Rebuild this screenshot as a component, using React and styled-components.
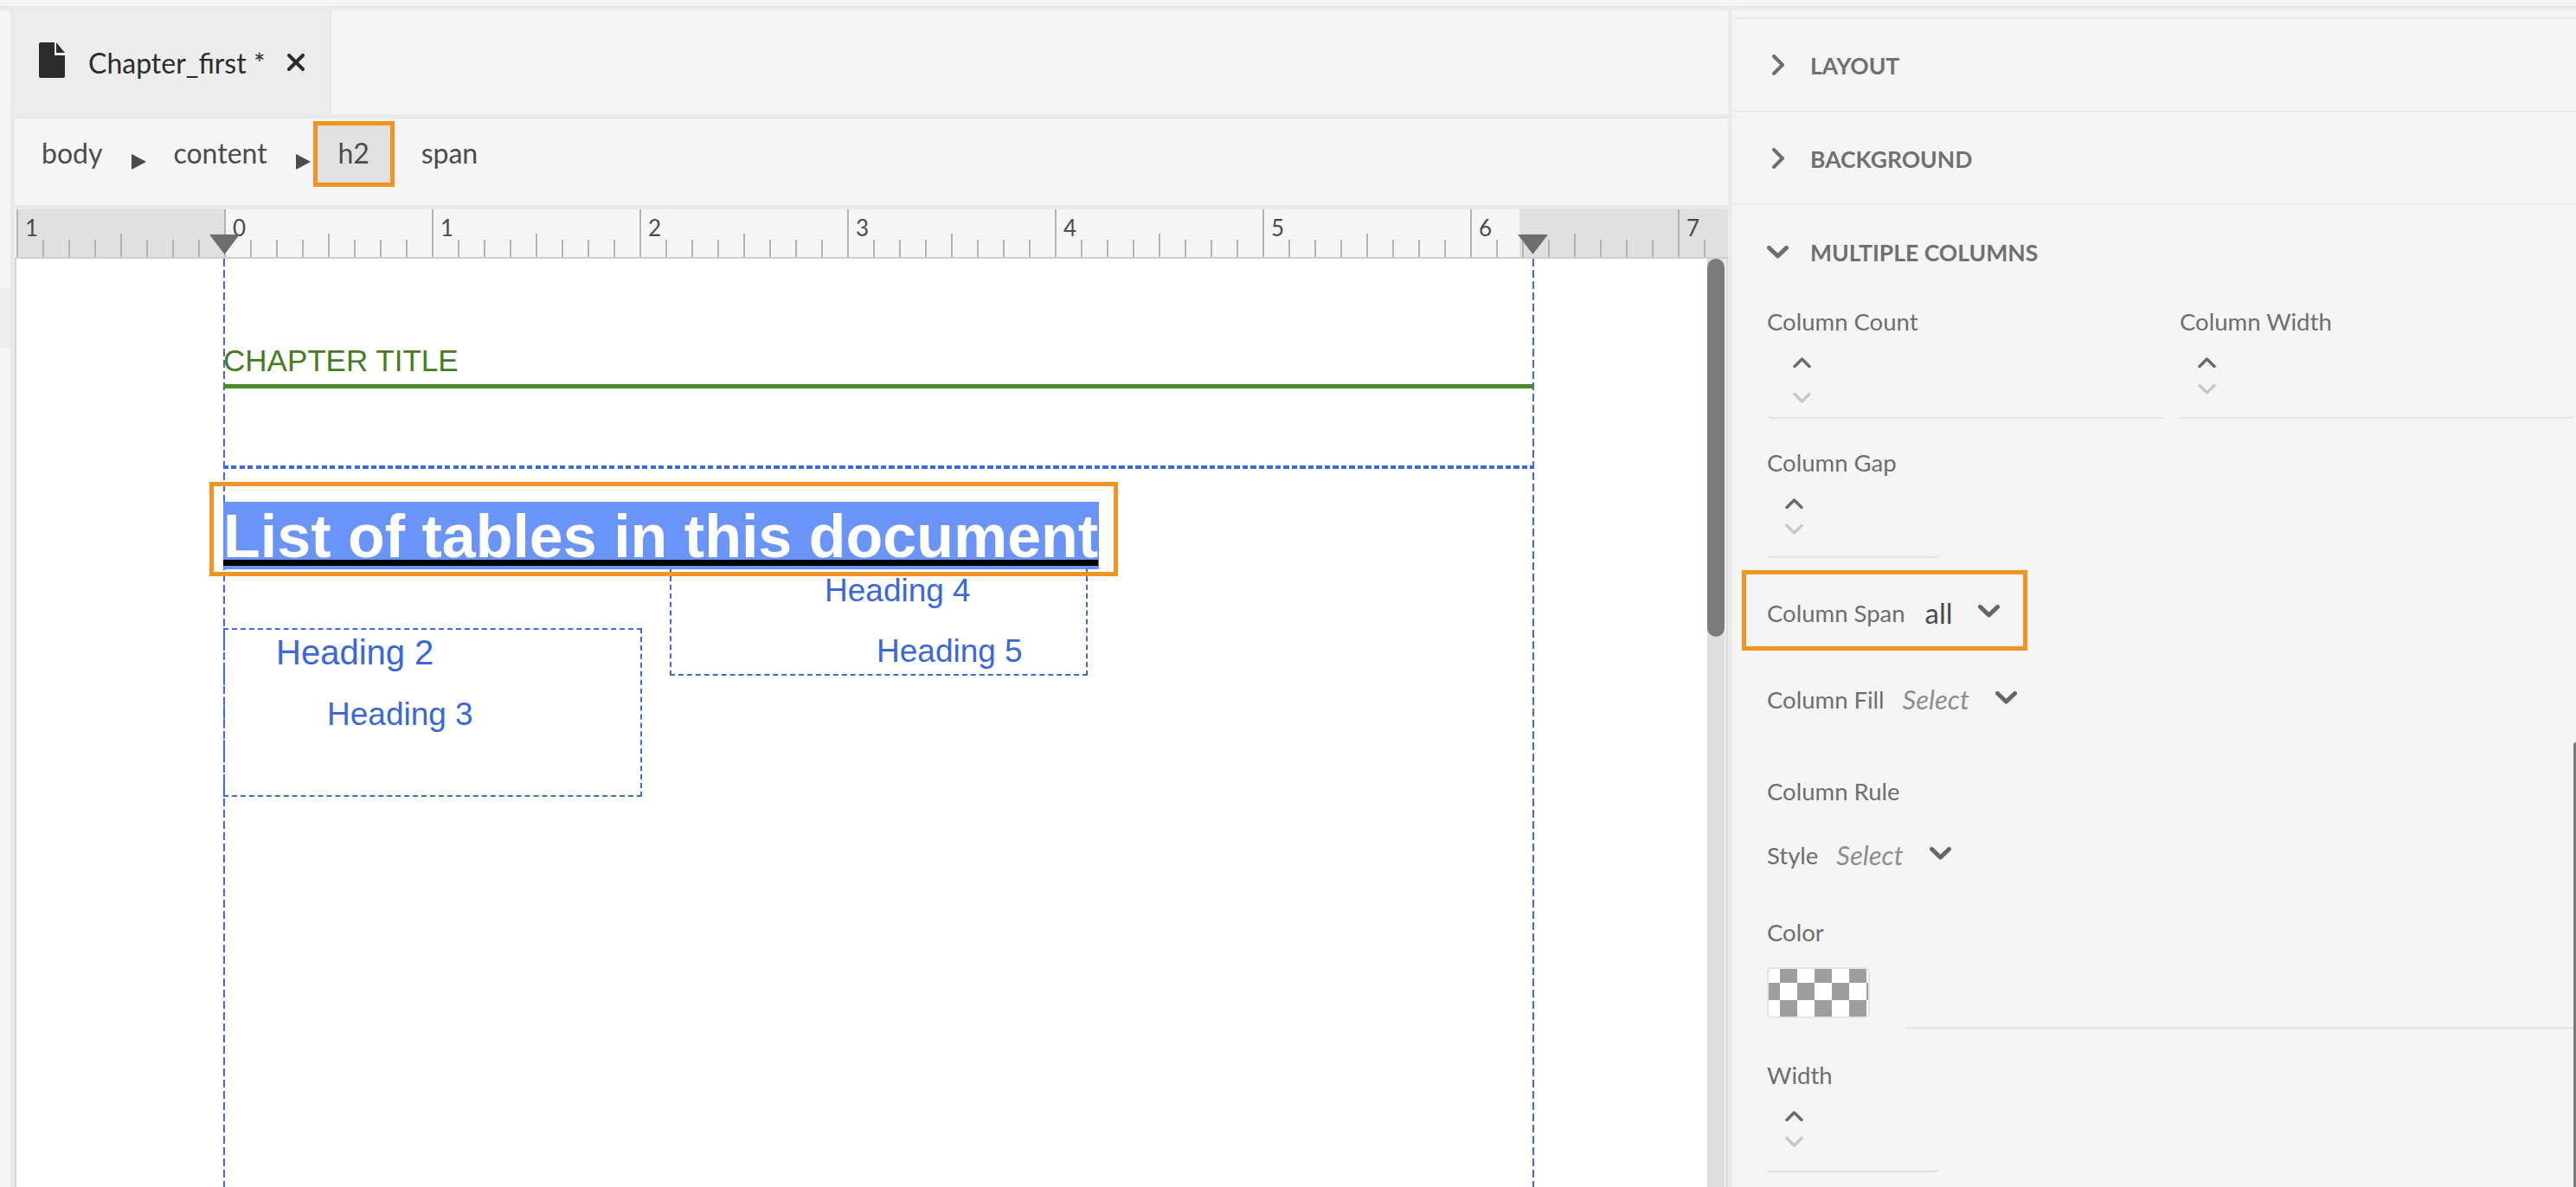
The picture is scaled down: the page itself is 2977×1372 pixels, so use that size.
import React from "react";
import styled, { createGlobalStyle } from "styled-components";

const Global = createGlobalStyle`
  html, body { margin: 0; padding: 0; background: #f5f5f5; }
  * { box-sizing: border-box; }
`;

const UI = `"Lato", "Open Sans", sans-serif`;
const ARIAL = `"Liberation Sans", Arial, sans-serif`;
const ORANGE = "#f29423";
const BLUE = "#3b6bdc";

const Root = styled.div`
  width: 2977px; height: 1372px; overflow: hidden; position: relative;
  background: #f5f5f5; display: flex; flex-direction: column; font-family: ${UI};
`;
const TopBand = styled.div`
  height: 12px; flex: none; background: #f5f5f5; border-bottom: 5px solid #e9e9e9;
`;
const Body = styled.div`display: flex; flex: 1; min-height: 0;`;
const Gutter = styled.div`
  width: 17px; flex: none; border-right: 5px solid #e9e9e9; padding-top: 320px;
`;
const GutterPatch = styled.div`height: 70px; background: #eeeeee;`;
const Main = styled.div`width: 1980px; flex: none; display: flex; flex-direction: column;`;
const Divider = styled.div`width: 5px; flex: none; background: #ebebeb;`;

const TabBar = styled.div`height: 125px; flex: none; display: flex; border-bottom: 5px solid #e9e9e9;`;
const Tab = styled.div`
  width: 366px; display: flex; align-items: center; padding-left: 28px;
  background: #ededed; border-right: 3px solid #e9e9e9;
`;
const TabTitle = styled.span`
  font-size: 32px; color: #2c2c2c; margin: 0 26px 0 27px; white-space: nowrap;
`;
const Crumbs = styled.div`
  height: 105px; flex: none; display: flex; align-items: center;
  padding: 3px 0 21px 31px; border-bottom: 5px solid #e9e9e9;
`;
const Crumb = styled.span`
  font-size: 32px; color: #4b4b4b; margin: -3px 0 0 ${(p) => p.$gap || 0}px; white-space: nowrap;
`;
const ActiveCrumb = styled.span`
  width: 94px; height: 76px; margin-left: 3px; padding-bottom: 3px; background: #e1e1e1;
  border: 5px solid ${ORANGE}; display: flex; align-items: center; justify-content: center; flex: none;
  font-size: 32px; color: #4b4b4b;
`;
const RulerWrap = styled.div`height: 57px; flex: none; border-bottom: 2px solid #cfcfcf;`;
const RulerSvg = styled.svg`display: block;`;
const Doc = styled.div`
  flex: 1; min-height: 0; display: flex; background: #fff; border-left: 2px solid #d6d6d6;
  border-right: 3px solid #e0e0e0; overflow: hidden;
`;
const DocCanvas = styled.div`flex: 1; min-width: 0; padding-left: 239px;`;
const Page = styled.div`
  width: 1515px; height: 100%; padding: 100px 1px 0 0;
  background:
    repeating-linear-gradient(to bottom, ${BLUE} 0 9px, transparent 9px 13px) left top / 2px 100% no-repeat,
    repeating-linear-gradient(to bottom, ${BLUE} 0 9px, transparent 9px 13px) right top / 2px 100% no-repeat;
`;
const ChapterTitle = styled.div`
  font: 35px/36px ${ARIAL}; color: #467c1f; height: 36px; white-space: nowrap;
`;
const ChapterRule = styled.div`height: 5px; margin-top: 9px; background: #4a8a2c;`;
const DottedRule = styled.div`
  height: 4px; margin-top: 89px;
  background: repeating-linear-gradient(to right, ${BLUE} 0 6px, transparent 6px 9.5px);
`;
const HeadingFrame = styled.div`
  width: 1050px; height: 109px; margin: 15px 0 0 -16px; padding: 18px 0 0 11px;
  border: 5px solid ${ORANGE}; position: relative; z-index: 2;
`;
const HeadingText = styled.span`
  display: block; width: 1012px; height: 78px; background: #6b94f9; color: #fff;
  font: 700 70px/80px ${ARIAL}; white-space: nowrap;
  text-decoration: underline; text-decoration-color: #000; text-decoration-thickness: 7px;
  text-underline-offset: 3px; text-decoration-skip-ink: none;
`;
const Columns = styled.div`display: flex; align-items: flex-start; gap: 32px; margin-top: 60px;`;
const ColumnBox = styled.div`
  width: ${(p) => p.$w}px; height: ${(p) => p.$h}px; margin-top: ${(p) => p.$top}px;
  border: 2px dashed ${BLUE}; padding-top: ${(p) => p.$pad}px;
`;
const BoxHeading = styled.div`
  font-family: ${ARIAL}; color: #3b68d6; white-space: nowrap;
  font-size: ${(p) => p.$size}px; line-height: ${(p) => p.$lh}px;
  padding-left: ${(p) => p.$indent}px; margin-top: ${(p) => p.$gap || 0}px;
`;
const Scrollbar = styled.div`width: 20px; flex: none; background: #dedede;`;
const Thumb = styled.div`height: 437px; width: 20px; background: #7b7b7b; border-radius: 10px;`;
const ScrollGap = styled.div`width: 1px; flex: none; background: #fff;`;

const Panel = styled.div`flex: 1; min-width: 0; padding-top: 8px; padding-right: 1px;`;
const PanelEdge = styled.div`
  position: absolute; right: 0; top: 858px; bottom: 0; width: 3px;
  background: #7a7a7a; border-radius: 3px 0 0 0;
`;
const Section = styled.div`
  height: ${(p) => p.$h}px; border-top: 2px solid #ebebeb; display: flex; align-items: center;
  padding-left: 40px;
`;
const SectionIcon = styled.span`width: 50px; flex: none; display: flex;`;
const SectionTitle = styled.span`
  font-size: 26.5px; font-weight: 700; color: #707070; white-space: nowrap; margin-top: 2px;
`;
const Content = styled.div`padding-left: 40px; border-top: 2px solid transparent;`;
const Pair = styled.div`display: flex; gap: 19px;`;
const Field = styled.div`
  width: ${(p) => p.$w}px; margin-top: ${(p) => p.$top || 0}px;
`;
const Label = styled.div`
  font-size: 27.5px; line-height: 30px; height: 30px; color: #6e6e6e; white-space: nowrap;
  margin-top: ${(p) => p.$top || 0}px;
`;
const Spinner = styled.div`
  height: ${(p) => p.$h}px; padding: 26px 0 0 ${(p) => p.$indent}px;
  display: flex; flex-direction: column; gap: ${(p) => p.$gap}px;
  border-bottom: 2px solid #e3e3e3; border-bottom-left-radius: ${(p) => p.$bl || 0}px;
  border-bottom-right-radius: ${(p) => p.$br || 0}px;
`;
const InlineRow = styled.div`
  display: flex; align-items: center; height: 30px; margin-top: ${(p) => p.$top}px;
`;
const SpanFrame = styled.div`
  width: 330px; height: 93px; margin: 14px 0 0 -29px; padding: 5px 0 0 24px;
  border: 5px solid ${ORANGE}; display: flex; align-items: center;
`;
const RowLabel = styled.span`font-size: 27.5px; color: #6e6e6e; white-space: nowrap;`;
const Value = styled.span`
  font-size: 33px; color: #4b4b4b; margin-left: ${(p) => p.$gap}px; white-space: nowrap;
`;
const Placeholder = styled.span`
  font-size: 31px; font-style: italic; color: #8e8e8e; margin-left: ${(p) => p.$gap}px; white-space: nowrap;
`;
const Caret = styled.svg`
  flex: none; margin-left: ${(p) => p.$gap}px; margin-top: -4px; display: block;
`;
const SwatchRow = styled.div`display: flex; margin-top: 25px; height: 71px;`;
const Swatch = styled.div`
  width: 119px; height: 59px; border-radius: 6px; border: 2px solid #e4e4e4;
  background: repeating-conic-gradient(#9e9e9e 0 25%, #fff 0 50%) -7px -4px / 40px 40px;
  background-origin: padding-box; background-clip: padding-box;
`;
const SwatchLine = styled.div`flex: 1; margin-left: 41px; align-self: flex-end; height: 2px; background: #e3e3e3;`;

const DocIcon = () => (
  <svg width="30" height="41" viewBox="0 0 30 41" style={{ marginTop: -5, flex: "none" }}>
    <path d="M2 0H18V15H30V39a2 2 0 0 1-2 2H2a2 2 0 0 1-2-2V2a2 2 0 0 1 2-2Z" fill="#2c2c2c" />
    <path d="M20 0L30 12H20Z" fill="#2c2c2c" />
  </svg>
);
const CloseIcon = () => (
  <svg width="20" height="20" viewBox="0 0 20 20" style={{ flex: "none" }}>
    <path d="M2 2L18 18M18 2L2 18" stroke="#2c2c2c" strokeWidth="4" strokeLinecap="round" />
  </svg>
);
const CrumbArrow = ({ gap }) => (
  <svg width="17" height="18" viewBox="0 0 17 18" style={{ marginLeft: gap, marginTop: 18, flex: "none" }}>
    <path d="M0 0L17 9L0 18Z" fill="#4b4b4b" />
  </svg>
);
const ChevronRight = () => (
  <svg width="16" height="24" viewBox="0 0 16 24" style={{ marginLeft: 5 }}>
    <path d="M3 2L13 12L3 22" fill="none" stroke="#6e6e6e" strokeWidth="4" strokeLinecap="round" strokeLinejoin="round" />
  </svg>
);
const ChevronDown = () => (
  <svg width="25" height="15" viewBox="0 0 25 15">
    <path d="M2.5 2.5L12.5 12L22.5 2.5" fill="none" stroke="#6e6e6e" strokeWidth="5" strokeLinecap="round" strokeLinejoin="round" />
  </svg>
);
const DropCaret = ({ gap }) => (
  <Caret $gap={gap} width="25" height="15" viewBox="0 0 25 15">
    <path d="M2.5 2.5L12.5 12L22.5 2.5" fill="none" stroke="#666" strokeWidth="5" strokeLinecap="round" strokeLinejoin="round" />
  </Caret>
);
const SpinUp = () => (
  <svg width="21" height="12" viewBox="0 0 21 12" style={{ display: "block" }}>
    <path d="M2 10.5L10.5 2L19 10.5" fill="none" stroke="#6a6a6a" strokeWidth="3.5" strokeLinecap="round" strokeLinejoin="round" />
  </svg>
);
const SpinDown = () => (
  <svg width="21" height="12" viewBox="0 0 21 12" style={{ display: "block" }}>
    <path d="M2 1.5L10.5 10L19 1.5" fill="none" stroke="#c8c8c8" strokeWidth="3.5" strokeLinecap="round" strokeLinejoin="round" />
  </svg>
);

const Ruler = () => {
  const ticks = [];
  for (let k = 0; k <= 65; k++) {
    const x = 3 + 30 * k;
    const y = k % 8 === 0 ? 0 : k % 4 === 0 ? 28 : 35;
    ticks.push(<rect key={k} x={x - 1} y={y} width="2" height={55 - y} fill="#b3b3b3" />);
  }
  const labels = [1, 0, 1, 2, 3, 4, 5, 6, 7];
  return (
    <RulerSvg width="1980" height="55" viewBox="0 0 1980 55">
      <rect x="2" width="241" height="55" fill="#e0e0e0" />
      <rect x="1739" width="241" height="55" fill="#e0e0e0" />
      {ticks}
      {labels.map((n, i) => (
        <text key={i} x={3 + 240 * i + 9} y="31" fontFamily={UI} fontSize="26" fill="#4b4b4b">{n}</text>
      ))}
      <path d="M225 29H260L242.5 52Z" fill="#6e6e6e" />
      <path d="M1737 29H1772L1754.5 52Z" fill="#6e6e6e" />
    </RulerSvg>
  );
};

export default function App() {
  return (
    <Root>
      <Global />
      <TopBand />
      <Body>
        <Gutter><GutterPatch /></Gutter>
        <Main>
          <TabBar>
            <Tab>
              <DocIcon />
              <TabTitle>Chapter_first *</TabTitle>
              <CloseIcon />
            </Tab>
          </TabBar>
          <Crumbs>
            <Crumb>body</Crumb>
            <CrumbArrow gap={34} />
            <Crumb $gap={31}>content</Crumb>
            <CrumbArrow gap={33} />
            <ActiveCrumb>h2</ActiveCrumb>
            <Crumb $gap={31}>span</Crumb>
          </Crumbs>
          <RulerWrap><Ruler /></RulerWrap>
          <Doc>
            <DocCanvas>
              <Page>
                <ChapterTitle>CHAPTER TITLE</ChapterTitle>
                <ChapterRule />
                <DottedRule />
                <HeadingFrame>
                  <HeadingText>List of tables in this document</HeadingText>
                </HeadingFrame>
                <Columns>
                  <ColumnBox $w={484} $h={195} $top={0} $pad={3}>
                    <BoxHeading $size={40} $lh={46} $indent={59}>Heading 2</BoxHeading>
                    <BoxHeading $size={37} $lh={42} $indent={118} $gap={28}>Heading 3</BoxHeading>
                  </ColumnBox>
                  <ColumnBox $w={483} $h={125} $top={-70} $pad={4}>
                    <BoxHeading $size={37} $lh={42} $indent={177}>Heading 4</BoxHeading>
                    <BoxHeading $size={37} $lh={42} $indent={237} $gap={28}>Heading 5</BoxHeading>
                  </ColumnBox>
                </Columns>
              </Page>
            </DocCanvas>
            <Scrollbar><Thumb /></Scrollbar>
            <ScrollGap />
          </Doc>
        </Main>
        <Divider />
        <Panel>
          <Section $h={108}>
            <SectionIcon><ChevronRight /></SectionIcon>
            <SectionTitle>LAYOUT</SectionTitle>
          </Section>
          <Section $h={107}>
            <SectionIcon><ChevronRight /></SectionIcon>
            <SectionTitle>BACKGROUND</SectionTitle>
          </Section>
          <Section $h={110}>
            <SectionIcon><ChevronDown /></SectionIcon>
            <SectionTitle>MULTIPLE COLUMNS</SectionTitle>
          </Section>
          <Content>
            <Pair>
              <Field $w={458} $top={10}>
                <Label>Column Count</Label>
                <Spinner $h={97} $indent={30} $gap={29} $bl={6}><SpinUp /><SpinDown /></Spinner>
              </Field>
              <Field $w={457} $top={10}>
                <Label>Column Width</Label>
                <Spinner $h={97} $indent={21} $gap={19} $br={6}><SpinUp /><SpinDown /></Spinner>
              </Field>
            </Pair>
            <Field $w={200} $top={36}>
              <Label>Column Gap</Label>
              <Spinner $h={95} $indent={21} $gap={18} $br={6}><SpinUp /><SpinDown /></Spinner>
            </Field>
            <SpanFrame>
              <RowLabel>Column Span</RowLabel>
              <Value $gap={23}>all</Value>
              <DropCaret gap={29} />
            </SpanFrame>
            <InlineRow $top={41}>
              <RowLabel>Column Fill</RowLabel>
              <Placeholder $gap={21}>Select</Placeholder>
              <DropCaret gap={30} />
            </InlineRow>
            <Label $top={77}>Column Rule</Label>
            <InlineRow $top={43}>
              <RowLabel>Style</RowLabel>
              <Placeholder $gap={21}>Select</Placeholder>
              <DropCaret gap={30} />
            </InlineRow>
            <Label $top={60}>Color</Label>
            <SwatchRow>
              <Swatch />
              <SwatchLine />
            </SwatchRow>
            <Field $w={200} $top={39}>
              <Label>Width</Label>
              <Spinner $h={97} $indent={21} $gap={18} $br={6}><SpinUp /><SpinDown /></Spinner>
            </Field>
          </Content>
        </Panel>
      </Body>
      <PanelEdge />
    </Root>
  );
}
